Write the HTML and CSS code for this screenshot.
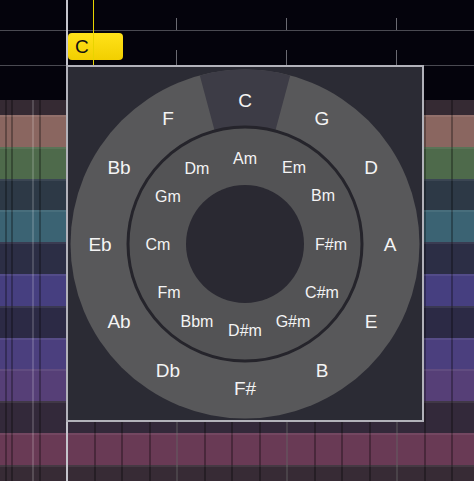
FILE: index.html
```html
<!DOCTYPE html>
<html>
<head>
<meta charset="utf-8">
<link rel="stylesheet" href="styles.css">
</head>
<body>
<div class="app">
  <div class="ruler"></div>
  <div class="chord-track">
    <div class="chord-block">C</div>
  </div>
  <div class="spacer"></div>
  <div class="lanes">
    <div class="lane l0"></div>
    <div class="lane l1"></div>
    <div class="lane l2"></div>
    <div class="lane l3"></div>
    <div class="lane l4"></div>
    <div class="lane l5"></div>
    <div class="lane l6"></div>
    <div class="lane l7"></div>
    <div class="lane l8"></div>
    <div class="lane l9"></div>
    <div class="lane l10"></div>
    <div class="lane l11"></div>
    <div class="lane l12"></div>
  </div>

  <div class="loop-line"></div>
  <div class="playhead"></div>

  <div class="popup">
    <svg class="wheel" width="354" height="353" viewBox="68 67 354 353">
      <circle class="ring-outer" cx="245" cy="244" r="174.5"/>
      <path class="seg-selected" d="M 199.8 75.4 A 174.5 174.5 0 0 1 290.2 75.4 L 275.3 131 A 117 117 0 0 0 214.7 131 Z"/>
      <circle class="ring-inner" cx="245" cy="244" r="117"/>
      <circle class="hole" cx="245" cy="244" r="59"/>

      <g class="major">
        <text x="245" y="100">C</text>
        <text x="322" y="118">G</text>
        <text x="371" y="167">D</text>
        <text x="390" y="244">A</text>
        <text x="371" y="321">E</text>
        <text x="322" y="370">B</text>
        <text x="245" y="388">F#</text>
        <text x="168" y="370">Db</text>
        <text x="119" y="321">Ab</text>
        <text x="100" y="244">Eb</text>
        <text x="119" y="167">Bb</text>
        <text x="168" y="118">F</text>
      </g>
      <g class="minor">
        <text x="245" y="158">Am</text>
        <text x="294" y="167">Em</text>
        <text x="323" y="195">Bm</text>
        <text x="331" y="244">F#m</text>
        <text x="322" y="292">C#m</text>
        <text x="293" y="321">G#m</text>
        <text x="245" y="330">D#m</text>
        <text x="197" y="321">Bbm</text>
        <text x="169" y="292">Fm</text>
        <text x="158" y="244">Cm</text>
        <text x="168" y="196">Gm</text>
        <text x="197" y="168">Dm</text>
      </g>
    </svg>
  </div>
</div>
</body>
</html>
```

FILE: styles.css
```css
html, body {
  margin: 0;
  padding: 0;
}
body {
  background: #05040d;
  font-family: "Liberation Sans", Arial, sans-serif;
}
.app {
  position: relative;
  width: 474px;
  height: 481px;
  overflow: hidden;
  background: #04030c;
}
.ruler {
  height: 30px;
  border-bottom: 1px solid #4a4a52;
  background-image: linear-gradient(to right, #6a6a72 0 1px, transparent 1px);
  background-size: 110px 12px;
  background-repeat: repeat-x;
  background-position: 176px 18px;
}
.chord-track {
  height: 34px;
  border-bottom: 1px solid #4a4a52;
  box-sizing: content-box;
  background-image: linear-gradient(to right, #6a6a72 0 1px, transparent 1px);
  background-size: 110px 15px;
  background-repeat: repeat-x;
  background-position: 176px 19px;
  padding-left: 68px;
  display: flex;
  align-items: flex-start;
}
.chord-block {
  margin-top: 2px;
  width: 55px;
  height: 27px;
  box-sizing: border-box;
  border-radius: 4px;
  background: linear-gradient(#ffe21a, #f2cf00);
  color: #111;
  font-size: 19px;
  line-height: 27px;
  padding-left: 7px;
}
.spacer {
  height: 34px;
}
.lanes {
  display: grid;
  grid-template-rows: 15px repeat(12, 31.8px);
}
.lane {
  box-shadow: inset 0 2px 0 rgba(255, 255, 255, 0.07);
  background-image:
    repeating-linear-gradient(to right, rgba(255, 255, 255, 0.16) 0 2px, transparent 2px 110px),
    repeating-linear-gradient(to right, rgba(0, 0, 0, 0.3) 0 2px, transparent 2px 27.5px);
  background-position: 66px 0, 11px 0;
}
.l0 { background-color: #352a33; box-shadow: none; }
.l1 { background-color: #8a6660; }
.l2 { background-color: #4e6a4b; }
.l3 { background-color: #2d3946; }
.l4 { background-color: #3b6373; }
.l5 { background-color: #2c2e45; }
.l6 { background-color: #463f80; }
.l7 { background-color: #2c2a45; }
.l8 { background-color: #4b3f7e; }
.l9 { background-color: #563f77; }
.l10 { background-color: #33293a; }
.l11 { background-color: #693a55; }
.l12 { background-color: #372b35; }

.loop-line {
  position: absolute;
  left: 66px;
  top: 0;
  width: 2px;
  height: 481px;
  background: #c4c4cc;
}
.playhead {
  position: absolute;
  left: 93px;
  top: 0;
  width: 1px;
  height: 65px;
  background: #e8d400;
}
.popup {
  position: absolute;
  left: 66px;
  top: 65px;
  width: 358px;
  height: 357px;
  box-sizing: border-box;
  border: 2px solid #b2b2ba;
  background: #2b2b34;
}
.wheel {
  display: block;
}
.ring-outer {
  fill: #58585a;
}
.seg-selected {
  fill: #3d3c46;
}
.ring-inner {
  fill: #535355;
  stroke: #25242b;
  stroke-width: 3;
}
.hole {
  fill: #2a2932;
}
.wheel text {
  fill: #f4f4f4;
  text-anchor: middle;
  dominant-baseline: central;
  font-family: "Liberation Sans", Arial, sans-serif;
}
.major text {
  font-size: 19px;
}
.minor text {
  font-size: 16px;
}
```
